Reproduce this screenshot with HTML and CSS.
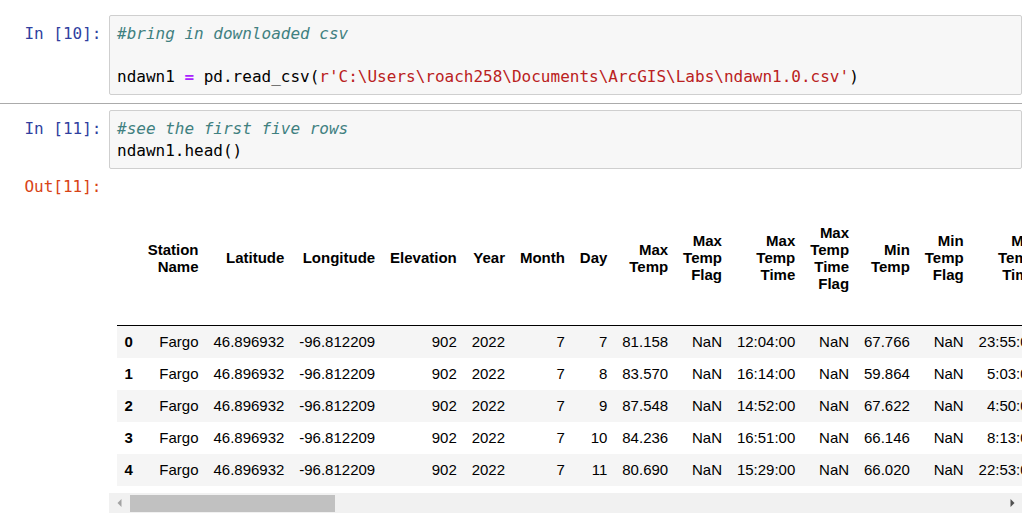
FILE: index.html
```html
<!DOCTYPE html>
<html lang="en">
<head>
<meta charset="utf-8">
<title>Notebook</title>
<link rel="stylesheet" href="styles.css">
</head>
<body>
<div class="notebook">
  <div class="cell cell-first">
    <div class="prompt in">In [10]:</div>
    <div class="input"><pre class="code"><span class="c">#bring in downloaded csv</span>

ndawn1 <span class="op">=</span> pd.read_csv(<span class="s">r'C:\Users\roach258\Documents\ArcGIS\Labs\ndawn1.0.csv'</span>)</pre></div>
  </div>
  <div class="cell cell-second">
    <div class="prompt in">In [11]:</div>
    <div class="input"><pre class="code"><span class="c">#see the first five rows</span>
ndawn1.head()</pre></div>
  </div>
  <div class="output">
    <div class="prompt out">Out[11]:</div>
    <div class="output-area">
      <div class="table-scroll">
        <table class="df">
          <thead>
            <tr>
              <th></th>
              <th>Station Name</th>
              <th>Latitude</th>
              <th>Longitude</th>
              <th>Elevation</th>
              <th>Year</th>
              <th>Month</th>
              <th>Day</th>
              <th>Max Temp</th>
              <th>Max Temp Flag</th>
              <th>Max Temp Time</th>
              <th>Max Temp Time Flag</th>
              <th>Min Temp</th>
              <th>Min Temp Flag</th>
              <th>Min Temp Time</th>
              <th>Min Temp Time Flag</th>
              <th>Avg Temp</th>
              <th>Avg Temp Flag</th>
              <th>Avg Bare Soil Temp</th>
              <th>Avg Bare Soil Temp Flag</th>
            </tr>
          </thead>
          <tbody>
            <tr><th>0</th><td>Fargo</td><td>46.896932</td><td>-96.812209</td><td>902</td><td>2022</td><td>7</td><td>7</td><td>81.158</td><td>NaN</td><td>12:04:00</td><td>NaN</td><td>67.766</td><td>NaN</td><td>23:55:00</td><td>NaN</td><td>73.949</td><td>NaN</td><td>76.312</td><td>NaN</td></tr>
            <tr><th>1</th><td>Fargo</td><td>46.896932</td><td>-96.812209</td><td>902</td><td>2022</td><td>7</td><td>8</td><td>83.570</td><td>NaN</td><td>16:14:00</td><td>NaN</td><td>59.864</td><td>NaN</td><td>5:03:00</td><td>NaN</td><td>72.102</td><td>NaN</td><td>75.884</td><td>NaN</td></tr>
            <tr><th>2</th><td>Fargo</td><td>46.896932</td><td>-96.812209</td><td>902</td><td>2022</td><td>7</td><td>9</td><td>87.548</td><td>NaN</td><td>14:52:00</td><td>NaN</td><td>67.622</td><td>NaN</td><td>4:50:00</td><td>NaN</td><td>77.615</td><td>NaN</td><td>77.021</td><td>NaN</td></tr>
            <tr><th>3</th><td>Fargo</td><td>46.896932</td><td>-96.812209</td><td>902</td><td>2022</td><td>7</td><td>10</td><td>84.236</td><td>NaN</td><td>16:51:00</td><td>NaN</td><td>66.146</td><td>NaN</td><td>8:13:00</td><td>NaN</td><td>75.040</td><td>NaN</td><td>77.450</td><td>NaN</td></tr>
            <tr><th>4</th><td>Fargo</td><td>46.896932</td><td>-96.812209</td><td>902</td><td>2022</td><td>7</td><td>11</td><td>80.690</td><td>NaN</td><td>15:29:00</td><td>NaN</td><td>66.020</td><td>NaN</td><td>22:53:00</td><td>NaN</td><td>73.355</td><td>NaN</td><td>76.988</td><td>NaN</td></tr>
          </tbody>
        </table>
      </div>
      <div class="scrollbar">
        <div class="sb-button">
          <svg width="5" height="8" viewBox="0 0 5 8"><polygon class="arrow-off" points="4.5,0 4.5,8 0.5,4"/></svg>
        </div>
        <div class="sb-track"><div class="sb-thumb"></div></div>
        <div class="sb-button">
          <svg width="5" height="8" viewBox="0 0 5 8"><polygon class="arrow-on" points="0.5,0 0.5,8 4.5,4"/></svg>
        </div>
      </div>
    </div>
  </div>
</div>
</body>
</html>
```
FILE: styles.css
```css
html, body {
  margin: 0;
  padding: 0;
  background: #ffffff;
}

.notebook {
  width: 1022px;
}

.cell {
  display: flex;
}

.cell-first {
  padding-top: 15px;
  padding-bottom: 8px;
}

.cell-second {
  border-top: 1px solid #ababab;
  padding-top: 6px;
}

.prompt {
  flex: none;
  width: 109px;
  box-sizing: border-box;
  padding-right: 7.5px;
  padding-top: 8.2px;
  text-align: right;
  white-space: pre;
  font-family: "DejaVu Sans Mono", "Liberation Mono", monospace;
  font-size: 16px;
  line-height: 21.25px;
}

.in {
  color: #303f9f;
}

.out {
  color: #d84315;
  padding-top: 7.4px;
}

.input {
  flex: 1;
  min-width: 0;
  background: #f7f7f7;
  border: 1px solid #cfcfcf;
  border-radius: 2px;
  padding: 7.2px 6px 7.2px 7px;
}

.code {
  margin: 0;
  font-family: "DejaVu Sans Mono", "Liberation Mono", monospace;
  font-size: 16px;
  line-height: 21.25px;
  color: #000000;
  white-space: pre;
}

.c {
  color: #408080;
  font-style: italic;
}

.op {
  color: #aa22ff;
  font-weight: bold;
}

.s {
  color: #ba2121;
}

.output {
  display: flex;
}

.output-area {
  flex: 1;
  min-width: 0;
  padding-top: 22px;
}

.table-scroll {
  overflow: hidden;
  padding-left: 8px;
  padding-bottom: 7px;
}

.df {
  border-collapse: collapse;
  border-spacing: 0;
  border: none;
  font-family: "Liberation Sans", Arial, sans-serif;
  font-size: 15px;
  line-height: 17px;
  color: #000000;
}

.df th,
.df td {
  padding: 7.5px 7.46px;
  text-align: right;
  vertical-align: middle;
  border: none;
}

.df thead tr {
  height: 134px;
}

.df thead th {
  font-weight: bold;
  border-bottom: 1px solid #000000;
}

.df tbody th {
  font-weight: bold;
}

.df tbody tr:nth-child(odd) {
  background: #f5f5f5;
}

.scrollbar {
  display: flex;
  height: 20px;
  background: #f1f1f1;
}

.sb-button {
  flex: none;
  width: 20px;
  display: flex;
  align-items: center;
  justify-content: center;
}

.sb-track {
  flex: 1;
  display: flex;
}

.sb-thumb {
  width: 205px;
  margin: 2px 0 1px 1px;
  background: #c1c1c1;
}

.arrow-off {
  fill: #a3a3a3;
}

.arrow-on {
  fill: #505050;
}
```
